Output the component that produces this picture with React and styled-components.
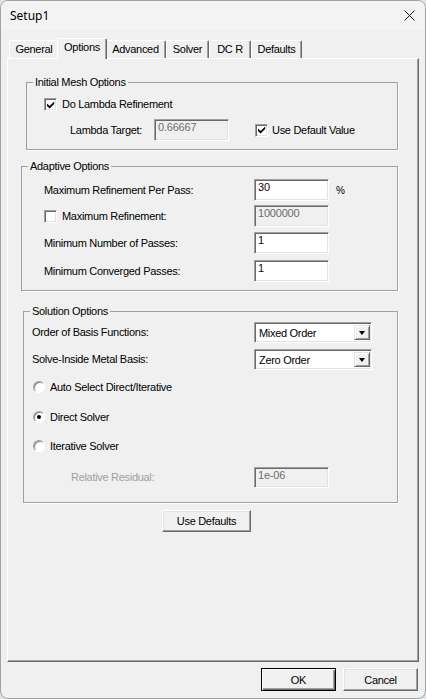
import React from 'react';
import styled, { createGlobalStyle } from 'styled-components';

const GlobalStyle = createGlobalStyle`
  html, body {
    margin: 0;
    padding: 0;
    background: #dfe3e8;
  }
  body {
    font-family: 'Liberation Sans', Arial, sans-serif;
  }
`;

const tabs = ['General', 'Options', 'Advanced', 'Solver', 'DC R', 'Defaults'];
const tabWidths = [50, 46, 61, 43, 42, 51];

function CheckMark() {
  return (
    <svg width="8" height="8" viewBox="0 0 8 8">
      <polygon points="0,2.6 2.6,5 7.2,0.4 7.2,3 2.6,7.6 0,5" fill="#000" />
    </svg>
  );
}

function App() {
  return (
    <>
      <GlobalStyle />
      <Window>
        <TitleBar>
          <Title>Setup1</Title>
          <svg width="11" height="11" viewBox="0 0 11 11">
            <path d="M0.5 0.5 L10.5 10.5 M10.5 0.5 L0.5 10.5" stroke="#1a1a1a" strokeWidth="1" />
          </svg>
        </TitleBar>

        <Body>
          <TabStrip>
            {tabs.map((t, i) => (
              <Tab key={t} $active={t === 'Options'} $w={tabWidths[i]}>
                {t}
              </Tab>
            ))}
          </TabStrip>

          <Panel>
            <Group $mt={17} $ml={18} $w={372}>
              <Legend>Initial Mesh Options</Legend>
              <GroupBody $pl={17} $pb={8}>
                <Row $mt={9} $h={13}>
                  <CheckBox>
                    <CheckMark />
                  </CheckBox>
                  <Label $ml={5}>Do Lambda Refinement</Label>
                </Row>
                <Row $mt={8} $h={22} $ml={26}>
                  <Label $w={84}>Lambda Target:</Label>
                  <TextBox $disabled>0.66667</TextBox>
                  <CheckBox $ml={26}>
                    <CheckMark />
                  </CheckBox>
                  <Label $ml={4}>Use Default Value</Label>
                </Row>
              </GroupBody>
            </Group>

            <Group $mt={10} $ml={13} $w={377}>
              <Legend>Adaptive Options</Legend>
              <GroupBody $pl={22} $pb={8}>
                <Row $mt={6} $h={22}>
                  <Label $w={210}>Maximum Refinement Per Pass:</Label>
                  <TextBox>30</TextBox>
                  <Unit>%</Unit>
                </Row>
                <Row $mt={4} $h={22}>
                  <CheckBox />
                  <Label $ml={5} $w={192}>Maximum Refinement:</Label>
                  <TextBox $disabled>1000000</TextBox>
                </Row>
                <Row $mt={5} $h={22}>
                  <Label $w={210}>Minimum Number of Passes:</Label>
                  <TextBox>1</TextBox>
                </Row>
                <Row $mt={6} $h={22}>
                  <Label $w={210}>Minimum Converged Passes:</Label>
                  <TextBox>1</TextBox>
                </Row>
              </GroupBody>
            </Group>

            <Group $mt={14} $ml={15} $w={375}>
              <Legend>Solution Options</Legend>
              <GroupBody $pl={8} $pb={14}>
                <Row $mt={4} $h={21}>
                  <Label $w={222}>Order of Basis Functions:</Label>
                  <Select>
                    <span>Mixed Order</span>
                    <ArrowButton />
                  </Select>
                </Row>
                <Row $mt={6} $h={21}>
                  <Label $w={222}>Solve-Inside Metal Basis:</Label>
                  <Select>
                    <span>Zero Order</span>
                    <ArrowButton />
                  </Select>
                </Row>
                <Row $mt={7} $h={20} $ml={1}>
                  <Radio />
                  <Label $ml={5}>Auto Select Direct/Iterative</Label>
                </Row>
                <Row $mt={10} $h={20} $ml={1}>
                  <Radio $checked />
                  <Label $ml={5}>Direct Solver</Label>
                </Row>
                <Row $mt={9} $h={20} $ml={1}>
                  <Radio />
                  <Label $ml={5}>Iterative Solver</Label>
                </Row>
                <Row $mt={11} $h={21} $ml={39}>
                  <Label $w={183} $disabled>Relative Residual:</Label>
                  <TextBox $disabled $h={21}>1e-06</TextBox>
                </Row>
              </GroupBody>
            </Group>

            <PushButton $mt={7} $ml={154} $w={89} $h={22}>
              Use Defaults
            </PushButton>
          </Panel>

          <Footer>
            <PushButton $default $w={75} $h={23}>
              OK
            </PushButton>
            <PushButton $w={75} $h={23}>
              Cancel
            </PushButton>
          </Footer>
        </Body>
      </Window>
    </>
  );
}

const Window = styled.div`
  width: 426px;
  height: 699px;
  box-sizing: border-box;
  border: 1px solid #a3a3a3;
  border-radius: 8px;
  overflow: hidden;
  background: #f0f0f0;
  display: flex;
  flex-direction: column;
`;

const TitleBar = styled.div`
  height: 29px;
  flex-shrink: 0;
  display: flex;
  align-items: center;
  justify-content: space-between;
  padding: 0 10px 0 9px;
  background: #f3f3f3;
`;

const Title = styled.div`
  font-family: 'Noto Sans', 'Open Sans', sans-serif;
  font-size: 12px;
  color: #000;
`;

const Body = styled.div`
  display: flex;
  flex-direction: column;
  padding: 8px 6px 0 6px;
`;

const TabStrip = styled.div`
  display: flex;
  align-items: flex-end;
  height: 20px;
  padding-left: 2px;
`;

const Tab = styled.div`
  position: relative;
  z-index: ${(p) => (p.$active ? 2 : 1)};
  box-sizing: border-box;
  width: ${(p) => p.$w + (p.$active ? 4 : 0)}px;
  height: ${(p) => (p.$active ? 21 : 18)}px;
  margin: ${(p) => (p.$active ? '0 -2px -1px -2px' : '0')};
  padding-top: 2px;
  border-top: 1px solid #fff;
  border-left: 1px solid #fff;
  border-right: 1px solid #696969;
  border-radius: 2px 2px 0 0;
  box-shadow: inset -1px 0 0 #a0a0a0;
  background: #f0f0f0;
  font-size: 11px;
  letter-spacing: -0.3px;
  line-height: 13px;
  text-align: center;
  color: #000;
`;

const Panel = styled.div`
  height: 604px;
  box-sizing: border-box;
  display: flex;
  flex-direction: column;
  align-items: flex-start;
  border: 1px solid;
  border-color: #fff #696969 #696969 #fff;
  box-shadow: inset -1px -1px 0 #a0a0a0;
`;

const Group = styled.fieldset`
  box-sizing: border-box;
  width: ${(p) => p.$w}px;
  min-width: 0;
  margin: ${(p) => p.$mt}px 0 0 ${(p) => p.$ml}px;
  padding: 0;
  border: 1px solid #a0a0a0;
  box-shadow: 1px 1px 0 #fff;
`;

const GroupBody = styled.div`
  padding: 0 0 ${(p) => p.$pb}px ${(p) => p.$pl}px;
`;

const Legend = styled.legend`
  margin-left: 6px;
  padding: 0 2px;
  font-size: 11px;
  letter-spacing: -0.3px;
  line-height: 13px;
  color: #000;
`;

const Row = styled.div`
  display: flex;
  align-items: center;
  height: ${(p) => p.$h}px;
  margin-top: ${(p) => p.$mt}px;
  margin-left: ${(p) => p.$ml || 0}px;
`;

const Label = styled.div`
  ${(p) => (p.$w ? `width: ${p.$w}px;` : '')}
  flex-shrink: 0;
  margin-left: ${(p) => p.$ml || 0}px;
  font-size: 11px;
  letter-spacing: -0.3px;
  line-height: 13px;
  white-space: nowrap;
  color: ${(p) => (p.$disabled ? '#a0a0a0' : '#000')};
`;

const Unit = styled.div`
  margin-left: 7px;
  font-size: 10px;
  color: #000;
`;

const sunken = `
  border: 1px solid;
  border-color: #a0a0a0 #fff #fff #a0a0a0;
  box-shadow: inset 1px 1px 0 #696969, inset -1px -1px 0 #e3e3e3;
`;

const TextBox = styled.div`
  box-sizing: border-box;
  width: 75px;
  height: ${(p) => p.$h || 22}px;
  flex-shrink: 0;
  ${sunken}
  padding: 1px 0 0 3px;
  background: ${(p) => (p.$disabled ? '#f0f0f0' : '#fff')};
  font-size: 11px;
  letter-spacing: -0.2px;
  line-height: 13px;
  color: ${(p) => (p.$disabled ? '#6d6d6d' : '#1a0010')};
`;

const CheckBox = styled.div`
  box-sizing: border-box;
  width: 13px;
  height: 13px;
  flex-shrink: 0;
  margin-left: ${(p) => p.$ml || 0}px;
  ${sunken}
  background: #fff;
  display: flex;
  align-items: center;
  justify-content: center;
  padding: 0 0 0 1px;
`;

const Radio = styled.div`
  box-sizing: border-box;
  width: 12px;
  height: 12px;
  flex-shrink: 0;
  border-radius: 50%;
  border: 1px solid;
  border-color: #a0a0a0 #fff #fff #a0a0a0;
  box-shadow: inset 1px 1px 0 #8a8a8a;
  background: #fff;
  display: flex;
  align-items: center;
  justify-content: center;

  &::after {
    content: '';
    display: ${(p) => (p.$checked ? 'block' : 'none')};
    width: 4px;
    height: 4px;
    border-radius: 50%;
    background: #000;
  }
`;

const Select = styled.div`
  box-sizing: border-box;
  width: 118px;
  height: 21px;
  flex-shrink: 0;
  ${sunken}
  background: #fff;
  display: flex;
  align-items: center;
  padding: 0 1px 0 4px;
  font-size: 11px;
  letter-spacing: -0.3px;
  color: #000;
`;

const ArrowButton = styled.div`
  box-sizing: border-box;
  width: 16px;
  height: 15px;
  margin-left: auto;
  border: 1px solid;
  border-color: #e3e3e3 #696969 #696969 #e3e3e3;
  box-shadow: inset 1px 1px 0 #fff, inset -1px -1px 0 #a0a0a0;
  background: #f0f0f0;
  display: flex;
  align-items: center;
  justify-content: center;

  &::after {
    content: '';
    width: 0;
    height: 0;
    border-left: 3.5px solid transparent;
    border-right: 3.5px solid transparent;
    border-top: 4px solid #000;
  }
`;

const PushButton = styled.div`
  box-sizing: border-box;
  width: ${(p) => p.$w}px;
  height: ${(p) => p.$h}px;
  flex-shrink: 0;
  margin-top: ${(p) => p.$mt || 0}px;
  margin-left: ${(p) => p.$ml || 0}px;
  border: 1px solid;
  border-color: ${(p) => (p.$default ? '#000' : '#fff #696969 #696969 #fff')};
  box-shadow: ${(p) =>
    p.$default
      ? 'inset 1px 1px 0 #fff, inset -1px -1px 0 #696969, inset -2px -2px 0 #a0a0a0'
      : 'inset -1px -1px 0 #a0a0a0, inset 1px 1px 0 #e3e3e3'};
  background: #f0f0f0;
  display: flex;
  align-items: center;
  justify-content: center;
  font-size: 11px;
  letter-spacing: -0.3px;
  color: #000;
`;

const Footer = styled.div`
  display: flex;
  justify-content: flex-end;
  gap: 7px;
  padding: 6px 1px 0 0;
`;

export default App;
